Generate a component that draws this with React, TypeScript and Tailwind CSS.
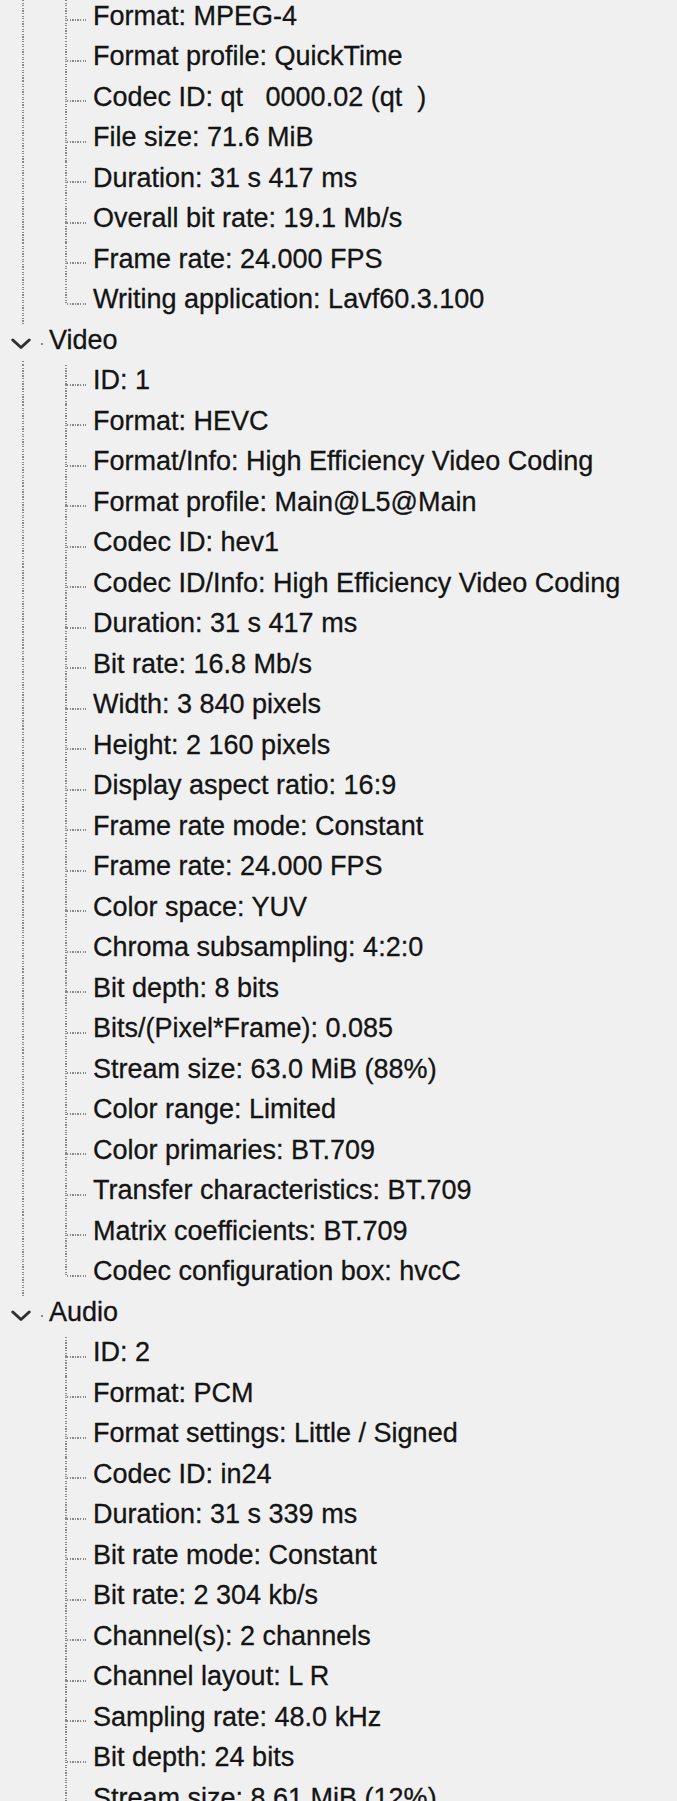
import React from 'react';

type Section = {
  title?: string;
  items: string[];
  lastSection?: boolean;
  openEnded?: boolean;
};

const sections: Section[] = [
  {
    items: [
      'Format: MPEG-4',
      'Format profile: QuickTime',
      'Codec ID: qt   0000.02 (qt  )',
      'File size: 71.6 MiB',
      'Duration: 31 s 417 ms',
      'Overall bit rate: 19.1 Mb/s',
      'Frame rate: 24.000 FPS',
      'Writing application: Lavf60.3.100',
    ],
  },
  {
    title: 'Video',
    items: [
      'ID: 1',
      'Format: HEVC',
      'Format/Info: High Efficiency Video Coding',
      'Format profile: Main@L5@Main',
      'Codec ID: hev1',
      'Codec ID/Info: High Efficiency Video Coding',
      'Duration: 31 s 417 ms',
      'Bit rate: 16.8 Mb/s',
      'Width: 3 840 pixels',
      'Height: 2 160 pixels',
      'Display aspect ratio: 16:9',
      'Frame rate mode: Constant',
      'Frame rate: 24.000 FPS',
      'Color space: YUV',
      'Chroma subsampling: 4:2:0',
      'Bit depth: 8 bits',
      'Bits/(Pixel*Frame): 0.085',
      'Stream size: 63.0 MiB (88%)',
      'Color range: Limited',
      'Color primaries: BT.709',
      'Transfer characteristics: BT.709',
      'Matrix coefficients: BT.709',
      'Codec configuration box: hvcC',
    ],
  },
  {
    title: 'Audio',
    lastSection: true,
    openEnded: true,
    items: [
      'ID: 2',
      'Format: PCM',
      'Format settings: Little / Signed',
      'Codec ID: in24',
      'Duration: 31 s 339 ms',
      'Bit rate mode: Constant',
      'Bit rate: 2 304 kb/s',
      'Channel(s): 2 channels',
      'Channel layout: L R',
      'Sampling rate: 48.0 kHz',
      'Bit depth: 24 bits',
      'Stream size: 8.61 MiB (12%)',
    ],
  },
];

// dotted tree lines
const dotV =
  'bg-[image:repeating-linear-gradient(to_bottom,#8a8a8a_0px,#8a8a8a_1.3px,transparent_1.3px,transparent_2.6px)]';
const dotH =
  'bg-[image:repeating-linear-gradient(to_right,#8a8a8a_0px,#8a8a8a_1.3px,transparent_1.3px,transparent_2.6px)]';

const label =
  "mb-[9px] whitespace-pre text-[27px] leading-[30px] text-[#141414] [-webkit-text-stroke:0.3px_#141414] font-['Liberation_Sans',Arial,sans-serif]";

function Chevron() {
  return (
    <svg width="22" height="12" viewBox="0 0 22 12" className="block">
      <polyline
        points="1.8,2 10,9.5 18.2,2"
        fill="none"
        stroke="#303030"
        strokeWidth="3"
        strokeLinecap="round"
        strokeLinejoin="round"
      />
    </svg>
  );
}

function HeaderRow({ title, last }: { title: string; last?: boolean }) {
  return (
    <div className="flex h-[40.5px]">
      <div className="flex w-[41px] flex-col">
        <div className="flex-1" />
        <div className="pl-[11px]">
          <Chevron />
        </div>
        <div className="flex flex-1 flex-col justify-end pl-[21.5px]">
          {!last && <div className={`h-[4px] w-[2px] ${dotV}`} />}
        </div>
      </div>
      <div className="flex items-center">
        <div className="h-[2px] w-[2px] bg-[#8a8a8a]" />
      </div>
      <div className="ml-[6px] flex items-center">
        <span className={label}>{title}</span>
      </div>
    </div>
  );
}

function LeafRow({
  text,
  outer,
  last,
}: {
  text: string;
  outer: boolean;
  last: boolean;
}) {
  return (
    <div className="flex h-[40.5px]">
      <div className="flex w-[45px] justify-center">
        {outer && <div className={`h-full w-[2px] ${dotV}`} />}
      </div>
      <div className="w-[20px]" />
      <div className="flex w-[2px] flex-col">
        <div className={`flex-1 ${dotV}`} />
        <div className={`flex-1 ${last ? '' : dotV}`} />
      </div>
      <div className="flex items-center">
        <div className={`h-[2px] w-[19px] ${dotH}`} />
      </div>
      <div className="ml-[7px] flex items-center">
        <span className={label}>{text}</span>
      </div>
    </div>
  );
}

export default function App() {
  return (
    <div className="h-[1801px] w-full overflow-hidden bg-[#f0f0f0]">
      {sections.map((s, si) => (
        <div key={si}>
          {s.title && <HeaderRow title={s.title} last={s.lastSection} />}
          {s.items.map((it, i) => (
            <LeafRow
              key={i}
              text={it}
              outer={!s.lastSection}
              last={!s.openEnded && i === s.items.length - 1}
            />
          ))}
        </div>
      ))}
    </div>
  );
}
